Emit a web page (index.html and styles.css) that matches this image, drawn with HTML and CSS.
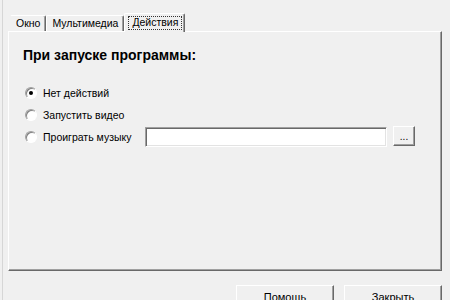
FILE: index.html
```html
<!DOCTYPE html>
<html lang="ru">
<head>
<meta charset="utf-8">
<link rel="stylesheet" href="styles.css">
</head>
<body>
<div class="screen">
  <div class="tabs">
    <div class="tab">Окно</div>
    <div class="tab">Мультимедиа</div>
    <div class="tab active"><span class="focus">Действия</span></div>
  </div>
  <div class="panel">
    <div class="heading">При запуске программы:</div>
    <div class="options">
      <div class="row"><span class="radio checked"></span><span class="label">Нет действий</span></div>
      <div class="row"><span class="radio"></span><span class="label">Запустить видео</span></div>
      <div class="row"><span class="radio"></span><span class="label wide">Проиграть музыку</span><span class="field"></span><span class="btn small">...</span></div>
    </div>
  </div>
  <div class="actions">
    <div class="btn big">Помощь</div>
    <div class="btn big">Закрыть</div>
  </div>
</div>
</body>
</html>
```

FILE: styles.css
```css
html, body {
  margin: 0;
  padding: 0;
  background: #f0f0f0;
}
.screen {
  width: 447px;
  height: 300px;
  margin-left: 2px;
  border-left: 1px solid #d6d6d6;
  padding: 13px 0 0 5px;
  box-sizing: border-box;
  overflow: hidden;
  font-family: "Liberation Sans", Arial, sans-serif;
  font-size: 10.5px;
  color: #000;
}
.tabs {
  display: flex;
  align-items: flex-end;
  height: 18px;
  padding-left: 2px;
  position: relative;
  z-index: 1;
}
.tab {
  height: 16px;
  line-height: 15px;
  padding: 0 5px 0 5px;
  box-sizing: border-box;
  border-top: 1px solid #fff;
  border-left: 1px solid #fff;
  border-right: 1px solid #696969;
  border-radius: 2px 2px 0 0;
  box-shadow: inset -1px 0 0 #a0a0a0;
}
.tab:first-child {
  border-left-color: #f0f0f0;
}
.tab.active {
  height: 19px;
  margin-bottom: -1px;
  padding: 2px 2px 0 3px;
  background: #f0f0f0;
  border-left-color: #fff;
}
.focus {
  display: block;
  height: 12px;
  line-height: 11px;
  padding: 0 3px 0 3px;
  border: 1px dotted #333;
}
.panel {
  width: 434px;
  height: 240px;
  box-sizing: border-box;
  border-top: 1px solid #fff;
  border-left: 1px solid #fff;
  border-right: 1px solid #696969;
  border-bottom: 1px solid #696969;
  box-shadow: inset -1px -1px 0 #a0a0a0;
  padding: 15px 0 0 14px;
}
.heading {
  font-size: 14px;
  font-weight: bold;
  line-height: 16px;
}
.options {
  margin-top: 19px;
  display: flex;
  flex-direction: column;
}
.row {
  display: flex;
  align-items: center;
  height: 22px;
}
.radio {
  width: 12px;
  height: 12px;
  margin-left: 2px;
  margin-right: 6px;
  box-sizing: border-box;
  border-radius: 50%;
  background: #fff;
  border: 1px solid;
  border-color: #a0a0a0 #fff #fff #a0a0a0;
  box-shadow: inset 1px 1px 0 #808080;
  position: relative;
}
.radio.checked::after {
  content: "";
  position: absolute;
  left: 3px;
  top: 3px;
  width: 4px;
  height: 4px;
  border-radius: 50%;
  background: #000;
}
.label.wide {
  width: 98px;
  margin-right: 4px;
}
.field {
  width: 242px;
  height: 20px;
  box-sizing: border-box;
  background: #fff;
  border: 1px solid;
  border-color: #a0a0a0 #fff #fff #a0a0a0;
  box-shadow: inset 1px 1px 0 #696969, inset -1px -1px 0 #e3e3e3;
}
.btn {
  box-sizing: border-box;
  background: #f0f0f0;
  border: 1px solid;
  border-color: #fff #696969 #696969 #fff;
  box-shadow: inset -1px -1px 0 #a0a0a0;
  display: flex;
  align-items: center;
  justify-content: center;
}
.btn.small {
  width: 22px;
  height: 20px;
  margin-left: 6px;
  margin-top: -2px;
  font-size: 10px;
  line-height: 1;
  padding-top: 2px;
}
.actions {
  display: flex;
  justify-content: flex-end;
  gap: 10px;
  margin-top: 14px;
  padding-right: 7px;
}
.btn.big {
  width: 98px;
  height: 23px;
  font-size: 11px;
}
```
